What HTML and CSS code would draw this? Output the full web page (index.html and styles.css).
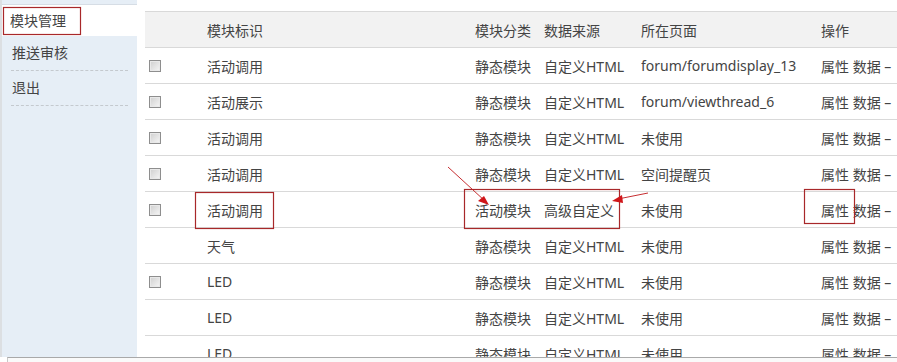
FILE: index.html
```html
<!DOCTYPE html>
<html lang="zh-CN">
<head>
    <meta charset="UTF-8">
    <title>模块管理</title>
    <link rel="stylesheet" href="styles.css">
</head>
<body>
    <div class="page">
        <div class="sidebar">
            <div class="side-top"></div>
            <div class="side-item active">模块管理</div>
            <div class="side-item">推送审核</div>
            <div class="side-item">退出</div>
        </div>

        <div class="main">
            <table class="list">
                <tr class="head">
                    <td class="c-check"></td>
                    <td class="c-name">模块标识</td>
                    <td class="c-type">模块分类</td>
                    <td class="c-src">数据来源</td>
                    <td class="c-page">所在页面</td>
                    <td class="c-op">操作</td>
                </tr>
                <tr>
                    <td class="c-check"><span class="checkbox"></span></td>
                    <td class="c-name">活动调用</td>
                    <td class="c-type">静态模块</td>
                    <td class="c-src">自定义HTML</td>
                    <td class="c-page">forum/forumdisplay_13</td>
                    <td class="c-op">属性 数据 –</td>
                </tr>
                <tr>
                    <td class="c-check"><span class="checkbox"></span></td>
                    <td class="c-name">活动展示</td>
                    <td class="c-type">静态模块</td>
                    <td class="c-src">自定义HTML</td>
                    <td class="c-page">forum/viewthread_6</td>
                    <td class="c-op">属性 数据 –</td>
                </tr>
                <tr>
                    <td class="c-check"><span class="checkbox"></span></td>
                    <td class="c-name">活动调用</td>
                    <td class="c-type">静态模块</td>
                    <td class="c-src">自定义HTML</td>
                    <td class="c-page">未使用</td>
                    <td class="c-op">属性 数据 –</td>
                </tr>
                <tr>
                    <td class="c-check"><span class="checkbox"></span></td>
                    <td class="c-name">活动调用</td>
                    <td class="c-type">静态模块</td>
                    <td class="c-src">自定义HTML</td>
                    <td class="c-page">空间提醒页</td>
                    <td class="c-op">属性 数据 –</td>
                </tr>
                <tr>
                    <td class="c-check"><span class="checkbox"></span></td>
                    <td class="c-name">活动调用</td>
                    <td class="c-type">活动模块</td>
                    <td class="c-src">高级自定义</td>
                    <td class="c-page">未使用</td>
                    <td class="c-op">属性 数据 –</td>
                </tr>
                <tr>
                    <td class="c-check"></td>
                    <td class="c-name">天气</td>
                    <td class="c-type">静态模块</td>
                    <td class="c-src">自定义HTML</td>
                    <td class="c-page">未使用</td>
                    <td class="c-op">属性 数据 –</td>
                </tr>
                <tr>
                    <td class="c-check"><span class="checkbox"></span></td>
                    <td class="c-name">LED</td>
                    <td class="c-type">静态模块</td>
                    <td class="c-src">自定义HTML</td>
                    <td class="c-page">未使用</td>
                    <td class="c-op">属性 数据 –</td>
                </tr>
                <tr>
                    <td class="c-check"></td>
                    <td class="c-name">LED</td>
                    <td class="c-type">静态模块</td>
                    <td class="c-src">自定义HTML</td>
                    <td class="c-page">未使用</td>
                    <td class="c-op">属性 数据 –</td>
                </tr>
                <tr>
                    <td class="c-check"></td>
                    <td class="c-name">LED</td>
                    <td class="c-type">静态模块</td>
                    <td class="c-src">自定义HTML</td>
                    <td class="c-page">未使用</td>
                    <td class="c-op">属性 数据 –</td>
                </tr>
            </table>
        </div>
    </div>
    <div class="bottom-bar"></div>

    <!-- red annotation marks drawn over the screenshot -->
    <svg class="marks" width="897" height="362" viewBox="0 0 897 362">
        <g fill="none" stroke="#a8282a" stroke-width="1.2">
            <rect x="3.5" y="7.5" width="77" height="27"/>
            <rect x="195.5" y="192.5" width="78" height="36"/>
            <rect x="464.5" y="189.5" width="155" height="39"/>
            <rect x="804.5" y="189.5" width="50" height="34"/>
        </g>
        <g stroke="#c0161a" stroke-width="0.9">
            <line x1="448" y1="167" x2="485" y2="201"/>
            <line x1="648" y1="193" x2="618" y2="199"/>
        </g>
        <g fill="#d0161a">
            <polygon points="489,205 478,201 484,196"/>
            <polygon points="612,201 622,195 623,203"/>
        </g>
    </svg>
</body>
</html>
```

FILE: styles.css
```css
body {
    margin: 0;
    padding: 0;
    width: 897px;
    height: 362px;
    overflow: hidden;
    position: relative;
    background-color: #fff;
    font-family: "Noto Sans", "Noto Sans CJK SC", sans-serif;
    font-size: 14px;
    color: #444;
}
.page {
    display: flex;
    height: 357px;
}
.sidebar {
    width: 135px;
    flex-shrink: 0;
    background-color: #e6eef6;
    border-left: 2px solid #dcdfe2;
}
.side-top {
    height: 4px;
    border-bottom: 1px solid #d6dde5;
}
.side-item {
    height: 34px;
    line-height: 34px;
    margin: 0 9px 0 9px;
    padding-left: 1px;
    border-bottom: 1px dashed #c4c9ce;
}
.side-item.active {
    height: 31px;
    line-height: 31px;
    margin: 0 -10px 0 0;
    padding-left: 8px;
    background-color: #fff;
    border-bottom: none;
}
.main {
    flex: 1;
    padding: 11px 0 0 8px;
    overflow: hidden;
}
.list {
    border-collapse: collapse;
    width: 760px;
    table-layout: fixed;
    white-space: nowrap;
}
.list td {
    height: 35px;
    padding: 0;
    border-top: 1px solid #d9d9d9;
    vertical-align: middle;
    overflow: hidden;
}
.head td {
    background-color: #f2f2f2;
}
.c-check {
    width: 62px;
    padding-left: 4px !important;
    box-sizing: border-box;
}
.c-name {
    width: 268px;
}
.c-type {
    width: 69px;
}
.c-src {
    width: 97px;
}
.c-page {
    width: 180px;
}
.checkbox {
    display: block;
    width: 10px;
    height: 10px;
    border: 1px solid #8e8e8e;
    background: linear-gradient(135deg, #cfcfcf, #f6f6f6);
    box-shadow: inset 0 0 0 1px #e9e9e9;
}
.bottom-bar {
    height: 4px;
    margin-left: 7px;
    border-top: 1px solid #a9a9a9;
    border-left: 1px solid #c9c9c9;
    background-color: #fafafa;
}
.marks {
    position: absolute;
    left: 0;
    top: 0;
}
```
